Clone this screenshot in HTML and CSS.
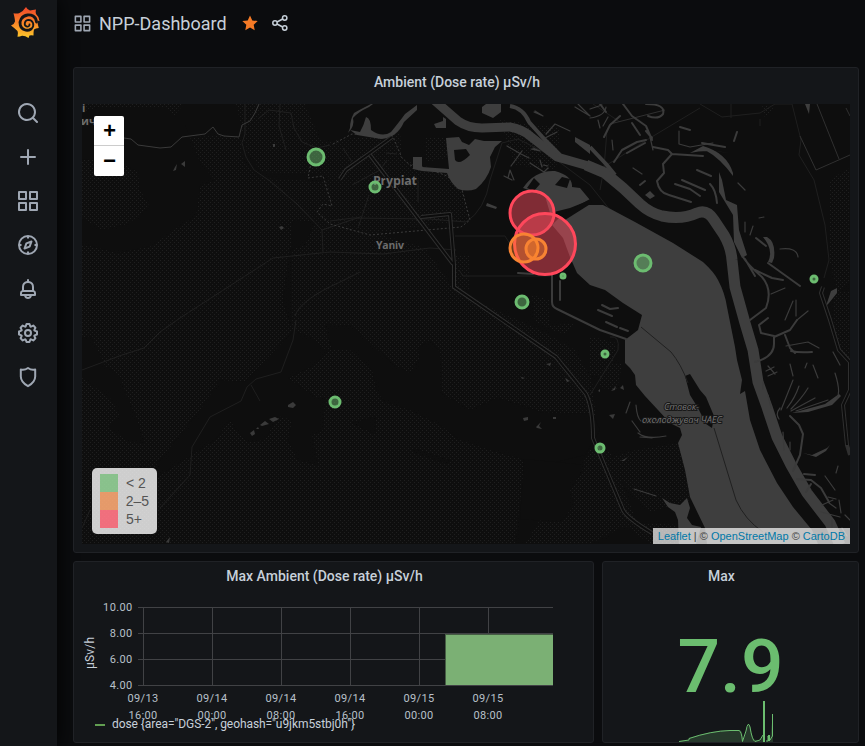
FILE: index.html
```
<!DOCTYPE html>
<html lang="en">
<head>
<meta charset="utf-8">
<title>NPP-Dashboard</title>
<link rel="stylesheet" href="styles.css">
</head>
<body>
<svg class="defs" width="0" height="0" aria-hidden="true">
  <symbol id="apps" viewBox="0 0 24 24"><path d="M10,13H3a1,1,0,0,0-1,1v7a1,1,0,0,0,1,1h7a1,1,0,0,0,1-1V14A1,1,0,0,0,10,13ZM9,20H4V15H9ZM21,2H14a1,1,0,0,0-1,1v7a1,1,0,0,0,1,1h7a1,1,0,0,0,1-1V3A1,1,0,0,0,21,2ZM20,9H15V4h5Zm1,4H14a1,1,0,0,0-1,1v7a1,1,0,0,0,1,1h7a1,1,0,0,0,1-1V14A1,1,0,0,0,21,13Zm-1,7H15V15h5ZM10,2H3A1,1,0,0,0,2,3v7a1,1,0,0,0,1,1h7a1,1,0,0,0,1-1V3A1,1,0,0,0,10,2ZM9,9H4V4H9Z"/></symbol>
</svg>
<div class="app">
  <nav class="sidebar">
    <svg class="logo" viewBox="0 0 29 31">
      <defs><linearGradient id="flame" x1="0" y1="1" x2="0" y2="0"><stop offset="0" stop-color="#fcc92b"/><stop offset=".45" stop-color="#f98a28"/><stop offset="1" stop-color="#f1462a"/></linearGradient></defs>
      <path fill="url(#flame)" d="M15 0Q16.500 3 19 3.500Q21.500 3 25 2.500Q24.300 5 25 7Q28 9.500 28.500 14L26.500 13.500Q26.300 16.500 27.800 21Q24.500 21 23 22.500Q22.500 24 22.500 28.500Q20 28 18.500 28.500L17.500 31Q14 28.500 11 28.700Q9 29.500 6.500 29.800Q7.500 26 6.500 24Q4 21.500 0 18.500Q3.500 17 4 14.500Q4 12 2.500 6.200Q6 7 8.500 6Q12 4.500 15 0Z"/>
      <path fill="none" stroke="#141619" stroke-width="2.800" stroke-linecap="round" d="M25.500 15C25 9 20 7.500 16.500 8C10.500 9 8 14 9.300 18.200C10.500 22.800 16 24.500 19.700 22.200"/>
      <path fill="none" stroke="#141619" stroke-width="1.800" stroke-linecap="round" d="M20.500 22C24 18.500 22 12.800 17.600 12.800C13.500 13 12.500 18 15.500 19.400C17.500 20 18.800 18.700 18.500 17.300"/>
    </svg>
    <div class="menu">
      <svg viewBox="0 0 24 24"><path d="M21.71,20.29,18,16.61A9,9,0,1,0,16.61,18l3.680,3.680a1,1,0,0,0,1.420,0A1,1,0,0,0,21.710,20.290ZM11,18a7,7,0,1,1,7-7A7,7,0,0,1,11,18Z"/></svg>
      <svg viewBox="0 0 24 24"><path d="M19,11H13V5a1,1,0,0,0-2,0v6H5a1,1,0,0,0,0,2h6v6a1,1,0,0,0,2,0V13h6a1,1,0,0,0,0-2Z"/></svg>
      <svg><use href="#apps"/></svg>
      <svg class="line" viewBox="0 0 24 24"><circle cx="12" cy="12" r="9"/><path d="M12 3v2.500M12 18.500V21M3 12h2.500M18.500 12H21M15.500 8.500L13.600 13.600L8.500 15.500L10.400 10.400Z"/></svg>
      <svg viewBox="0 0 24 24"><path d="M18,13.180V10a6,6,0,0,0-5-5.910V3a1,1,0,0,0-2,0V4.090A6,6,0,0,0,6,10v3.180A3,3,0,0,0,4,16v2a1,1,0,0,0,1,1H8.140a4,4,0,0,0,7.720,0H19a1,1,0,0,0,1-1V16A3,3,0,0,0,18,13.180ZM8,10a4,4,0,0,1,8,0v3H8Zm4,10a2,2,0,0,1-1.720-1h3.440A2,2,0,0,1,12,20Zm6-3H6V16a1,1,0,0,1,1-1H17a1,1,0,0,1,1,1Z"/></svg>
      <svg viewBox="0 0 24 24"><path d="M21.32,9.55l-1.89-.63.89-1.78A1,1,0,0,0,20.13,6L18,3.87a1,1,0,0,0-1.15-.19l-1.78.89-.63-1.89A1,1,0,0,0,13.5,2h-3a1,1,0,0,0-.95.68L8.92,4.57,7.14,3.68A1,1,0,0,0,6,3.87L3.87,6a1,1,0,0,0-.19,1.15l.89,1.78-1.89.63A1,1,0,0,0,2,10.5v3a1,1,0,0,0,.68.95l1.89.63-.89,1.78A1,1,0,0,0,3.87,18L6,20.13a1,1,0,0,0,1.15.19l1.78-.89.63,1.89a1,1,0,0,0,.95.68h3a1,1,0,0,0,.95-.68l.63-1.89,1.78.89A1,1,0,0,0,18,20.13L20.13,18a1,1,0,0,0,.19-1.15l-.89-1.78,1.89-.63A1,1,0,0,0,22,13.5v-3A1,1,0,0,0,21.32,9.55ZM20,12.78l-1.2.4A2,2,0,0,0,17.64,16l.57,1.14-1.1,1.1L16,17.64a2,2,0,0,0-2.79,1.16l-.4,1.2H11.22l-.4-1.2A2,2,0,0,0,8,17.64l-1.14.57-1.1-1.1L6.36,16A2,2,0,0,0,5.2,13.18L4,12.78V11.22l1.2-.4A2,2,0,0,0,6.36,8L5.79,6.89l1.1-1.1L8,6.36A2,2,0,0,0,10.82,5.2l.4-1.2h1.56l.4,1.2A2,2,0,0,0,16,6.36l1.14-.57,1.1,1.1L17.64,8a2,2,0,0,0,1.16,2.79l1.2.4ZM12,8a4,4,0,1,0,4,4A4,4,0,0,0,12,8Zm0,6a2,2,0,1,1,2-2A2,2,0,0,1,12,14Z"/></svg>
      <svg class="line" viewBox="0 0 24 24"><path d="M12 3Q8.500 5.400 4.800 4.400V11.500C4.800 16.500 8.500 19.200 12 21.200C15.500 19.200 19.200 16.500 19.200 11.500V4.400Q15.500 5.400 12 3Z"/></svg>
    </div>
  </nav>
  <main class="main">
    <header class="topbar">
      <svg class="t-icon"><use href="#apps"/></svg>
      <h1>NPP-Dashboard</h1>
      <svg class="star" viewBox="0 0 16 16"><path d="M8 0.500L10.300 5.400L15.700 6.100L11.700 9.800L12.700 15.200L8 12.600L3.300 15.200L4.300 9.800L0.300 6.100L5.700 5.400Z"/></svg>
      <svg class="share" viewBox="0 0 16 16"><circle cx="3" cy="8" r="2.200"/><circle cx="12.700" cy="3" r="2.200"/><circle cx="12.700" cy="13" r="2.200"/><path d="M5 7L10.700 4M5 9L10.700 12"/></svg>
    </header>

    <section class="panel map-panel">
      <h2>Ambient (Dose rate) μSv/h</h2>
      <div class="map">
        <svg class="tiles" viewBox="82 104 768 440" width="768" height="440">
          <defs>
            <pattern id="wood" width="4" height="4" patternUnits="userSpaceOnUse"><path d="M0 0h1v1H0zM2 2h1v1H2z" fill="#1f1f1f"/></pattern>
          </defs>
          <g fill="url(#wood)">
            <path d="M82 104H184L172 118L192 137L240 135L243 160L262 178L330 182L322 212L372 232L425 248L456 292L540 330L575 350L592 380L596 420L586 430L530 445L525 462L515 544H82Z"/>
            <path d="M236 104H305L320 140L333 142V175L262 172L246 150L240 120ZM335 140L400 133L403 165L460 176L470 220L435 224L365 235L320 216ZM425 137L448 138L447 158L425 162Z"/>
            <path d="M395 158L446 172L455 215L390 210ZM500 120L560 128L556 170L515 165ZM456 255H470V290H456ZM532 295L550 300V328L535 322ZM548 326L574 323L565 334L552 330ZM589 336L616 343L612 374L590 376Z"/>
            <path d="M600 362L622 364L617 390L600 388ZM636 450L679 443L690 500L650 512L602 460ZM590 450L610 452L636 520L590 544H525L540 520L570 515L550 506L575 478Z"/>
            <path d="M829 180L850 168V280L838 292L829 260ZM833 292H850V365L835 345ZM762 105L774 107L765 118ZM620 522L680 525V544H650Z"/>
          </g>
          <g fill="#0e0e0e">
            <path d="M99 107H165L185 125L200 162L215 180L200 186L196 216L175 229L152 246L118 253L82 244V218L102 230L128 224L150 207L140 190L138 172L112 158L82 160V112Z"/>
            <path d="M82 338L91 336L105 366L118 374L135 415L145 443L128 442L109 427L120 415L110 398L82 378Z"/>
            <path d="M294 220L315 222L305 245L290 250L283 300L292 330V224ZM293 331L313 338L325 350L330 350L313 366L288 378L305 390L316 397H325L323 430L312 435L318 465L298 460L288 440L292 420L278 416L265 440L248 442L236 430L230 420L215 440L140 488L163 456L200 410L220 380L245 382Z"/>
            <path d="M325 324L352 326L378 350L394 365L410 373L420 358L418 348L430 340L440 352L442 378L441 393L470 410L497 398L525 406L540 412L593 414L600 430L585 455L552 463L525 460L490 450L460 440L440 425L410 410L385 402L377 392L372 370L350 350L332 350Z"/>
            <path d="M524 459L586 465L570 490L575 505L560 522L520 519ZM413 448L450 460L447 464L415 453ZM352 423L376 416L375 434Z"/>
          </g>

          <g class="road">
            <path d="M82 370L122 355L144 348L160 332L180 318L273 258L330 252L383 254L430 248L456 250M245 104V134L242 143L246 157L254 170L270 181L297 204L322 230L323 252M322 230L360 217M296 320L293 340L281 372L256 379L247 387L241 401L210 417L192 447L190 475L160 508M251 385L260 401M82 528L90 510M295 316Q300 300 340 282L360 272"/>
            <path d="M258 119L269 110L291 113L294 128L302 142L317 148L330 145M280 104L279 126L286 150M330 221L353 218L430 219L466 222Q485 210 490 180L502 143L518 139L550 155L590 185L610 210M455 236H505L510 244M459 270L463 276H550M343 148L352 162M386 153L397 154M352 185L380 170L387 160M418 180V202M369 195L358 228"/>
            <path d="M600 190L604 168L607 130M602 168L650 138L700 108M700 104L722 117L760 113L775 104H792L801 140L799 155L814 180L825 225L829 260L824 278M731 118V104M760 119V126M590 395L618 350Q620 335 610 337M593 104L620 122"/>
          </g>
          <g class="road-lit">
            <path d="M817 104L839 159M800 136L816 170L850 155M846 108L850 116M610 124L665 110"/>
            <path class="creek" d="M124 138L131 139L138 145L160 148L171 147L182 137L205 134L213 127L218 134L224 136L239 137L242 125L250 121L255 113L259 104"/>
            <path class="dash" d="M333 144L352 134L393 137L402 158L410 165L434 171L447 176L462 190L470 220L461 227L370 235L330 224L317 212L323 204L332 206L323 176L308 178L311 163"/>
          </g>

          <g class="water">
            <path d="M587 205L603 205L635 222L673 243L703 262Q714 272 718 280Q725 293 727 307L730 322L735 347L737 360L742 380L740 394L745 391L750 420L760 450L777 483L793 507L812 530L818 544H707L705 528L690 497L685 470L678 443L682 435L680 428L670 423L658 410L645 396L636 385L635 375L630 368L625 363V340L638 330L642 315L623 303L605 290L590 285L577 273L570 257L563 238L552 225L560 217Z"/>
            <path d="M446 138L459 137L462 142L469 145L475 139L484 141L494 141L502 141L495 147L490 157L491 167Q487 180 476 189Q467 192 458 189Q450 182 447 173L422 171L413 169V157L422 157V167L449 169ZM454 150L455 160Q459 166 470 155L466 149Z" fill-rule="evenodd"/>
            <path d="M348 133Q355 126 353 118Q358 112 369 107L373 104H371Q359 110 354 113Q350 120 350 128ZM350 130L360 132Q364 125 366 117Q371 118 371 130Q382 138 391 132Q400 121 405 114L417 105V110L404 122Q397 138 381 139L357 135Z"/>
            <path d="M482 107L486 104H501L501 112L493 118L482 113ZM434 124L443 121V117L446 119V128L436 128ZM487 203L497 207L496 209L486 206ZM575 137L590 145V154L575 142ZM523 188Q535 170 555 171Q573 176 572 187L580 188L590 200L570 208L550 213L545 196Z"/>
            <path d="M805 104H810L809 114ZM826 306L831 291L837 288V293L829 303ZM645 195L650 191L655 196L650 199ZM662 498L670 503L680 505L687 498L690 508L687 518L692 525L701 527L696 544H679L678 520L675 512L668 507Z"/>
            <path d="M803 453L812 455L827 448L830 445L826 451L816 457ZM792 413L825 404L839 394L841 396L832 405L808 412ZM730 153Q706 149 690 153L703 146Q727 153 733 173L733 176Q720 158 705 150ZM767 237Q776 242 774 258L772 263L768 262Q774 250 763 237ZM719 172L722 180L726 200L737 205L739 230L747 255L742 258L734 242L733 215L719 192Z"/>
          </g>
          <path class="river" d="M434 100L458 121Q468 128 482 128L510 127Q522 129 530 136L557 157L592 167"/>
          <path class="river wide" d="M586 165L605 173L623 188L640 204Q650 213 662 216Q682 220 697 213Q707 209 714 220L724 235Q731 247 732 260L735 287L745 323L753 350L758 382L767 407L777 437L791 465L807 493L830 523L840 545"/>
          <path class="river slim" d="M510 106Q523 108 529 122L545 140L560 155M590 147L606 164L615 175"/>
          <g class="stream">
            <path d="M623 104L632 116L646 126L652 140M632 123L640 135M646 131L652 138M614 162L622 150L637 142L646 140M627 153L636 148L645 143M620 116L610 125L604 137M646 104Q666 104 663 114Q658 120 648 116M680 127L690 130M737 132L734 141M702 143L725 147M653 147L668 150L672 154L663 164L664 173L657 181Q659 193 669 195L691 202M675 184L690 189L700 196M682 180L705 190M697 170L711 176M672 154L703 156M710 184Q716 190 717 203M743 257Q748 265 762 277Q773 290 766 308L750 320M745 259L755 276M755 270L772 278L783 280M768 263L800 286M756 238L766 246M640 185L645 181"/>
            <path class="fine" d="M679 131V144L690 147L713 143M753 226L750 235M771 294L785 288M785 320L793 301M797 320L808 311M796 300V316M745 222V232M759 218L764 217M650 137L653 150M780 249Q797 247 798 257M738 183L745 190M511 166L522 151M508 178L510 170L514 180M507 146L521 154L529 158M533 148L540 151L531 149M504 176L512 180M530 163L544 172L548 168M543 165L548 166M540 160L542 167M535 111L543 116L534 112M546 134L555 124L570 131M545 138L557 132M578 104L590 116L575 107M590 109L602 105M590 118Q605 116 606 107M612 140L613 150M603 126L608 117M598 120L600 128M642 174L633 168"/>
            <path d="M755 362Q774 357 774 344V336L761 333L759 325L768 318M774 337L790 330L797 320M785 335L790 348L795 353M791 351Q799 353 812 352"/>
            <path class="fine" d="M786 346L808 342L819 348M768 366L775 374M766 371L774 367M768 376L777 372M790 364L793 376M807 363L805 368M813 365L818 378M835 373Q841 392 837 398M781 410L793 380M787 408Q795 398 799 386M791 409Q802 398 808 388M791 411L815 398M796 411L828 400M780 408Q775 414 779 419M833 352L840 365M783 432L784 450M768 395L771 408M763 382V389M626 413L630 402M636 405Q637 418 641 421M632 421L640 432M638 433Q647 440 666 436M640 437L652 438M634 489L656 496M790 442V450M838 466L836 473M825 476L835 490M821 512L840 517M822 505L833 500M832 520V530M839 500L841 513M845 515L850 520M829 503L836 508M842 528L847 536M828 497L836 499"/>
            <path d="M790 416L799 425L803 434L800 455L793 471M797 479L811 480L821 488L829 502M804 474L815 475M811 484L806 492M600 104L606 112"/>
            <path d="M552 273V302Q552 307 557 309L600 330L626 339M560 281V300M602 305L610 309L618 308M598 310L612 316M620 328L628 331M606 322L617 327M518 273L533 274"/>
          </g>
          <g class="ponds">
            <path d="M175 269l1-2zM279 227l3-1 2 2-3 2zM273 144h2v3h-2zM173 171l3-1 1-6-2 3zM181 164l4-3v6zM250 433l4-3 1 4-3 2zM256 429l2-2 1 2zM260 425l5-4 4 3-7 2zM269 419l6-2 4 2-6 3zM288 405l5-3 3 3-3 3-5-1zM166 542l4-5-1 6zM611 391l5-5-1 4zM598 391l2-2v3zM609 415l6-1-2 5zM620 388l3-3 1 5zM621 461l7-4-4 4zM523 418l5-1v3l-4 1zM536 427l5-5-2 4 3 3-5-1zM546 364l5-1-1 3zM521 377l4 1-3 1zM565 378l5 3-3 1zM553 417h3v2h-3z"/>
          </g>
          <path class="land" d="M685 376L690 374L700 390L706 397L714 416L712 428L706 424L698 408L690 395Z"/>
          <path class="seam" d="M641 327L671 352Q681 364 688 383M714 428L736 500Q745 520 763 532"/>
          <g class="rails">
            <path class="case" d="M392 137L370 153L346 170L340 179M370 155L453 264M421 217L450 214L454 265V287L556 357L586 394Q593 408 593 438L623 510Q627 518 652 533M823 287L821 293L830 320L839 350L850 362V390L843 405L847 445L850 455"/>
            <path class="core" d="M392 137L370 153L346 170L340 179M370 155L453 264M421 217L450 214L454 265V287L556 357L586 394Q593 408 593 438L623 510Q627 518 652 533M823 287L821 293L830 320L839 350L850 362V390L843 405L847 445"/>
          </g>
          <path class="land" d="M556 218L590 199L592 203L565 220ZM534 178L540 184L534 191L527 188ZM555 185L562 177L570 179L567 188Z"/>

          <g class="places">
            <text x="373" y="185" textLength="44" font-size="12.500">Prypiat</text>
            <text x="376" y="249" textLength="28" font-size="10.500">Yaniv</text>
            <text x="82" y="112" font-size="11">і</text>
            <text x="81" y="125" font-size="11">ич</text>
            <text class="lake" x="664" y="410" textLength="35">Ставок-</text>
            <text class="lake" x="642" y="423" textLength="80">охолоджувач ЧАЕС</text>
          </g>

          <g class="markers">
            <g class="ok"><circle cx="316" cy="157" r="8"/><circle cx="375" cy="187" r="5"/><circle cx="643" cy="263" r="8"/><circle cx="522" cy="302" r="6"/><circle cx="814" cy="279" r="3"/><circle cx="563" cy="276" r="2"/><circle cx="605" cy="354" r="3"/><circle cx="600" cy="448" r="4"/><circle cx="335" cy="402" r="5"/></g>
            <g class="bad"><circle cx="532" cy="213" r="22"/><circle cx="545" cy="244" r="30.500"/></g>
            <g class="warn"><circle cx="524" cy="248" r="14"/><circle cx="536" cy="249" r="10"/></g>
          </g>
        </svg>
        <div class="zoom"><span>+</span><span>−</span></div>
        <div class="legend">
          <div><i class="g"></i>&lt; 2</div>
          <div><i class="o"></i>2–5</div>
          <div><i class="r"></i>5+</div>
        </div>
        <div class="attribution"><a>Leaflet</a> | © <a>OpenStreetMap</a> © <a>CartoDB</a></div>
      </div>
    </section>

    <div class="row">
      <section class="panel chart-panel">
        <h2>Max Ambient (Dose rate) μSv/h</h2>
        <svg class="chart" viewBox="74 591 519 151" width="519" height="151">
          <g class="grid">
            <path d="M138 607.500H553M138 633.500H553M138 659.500H553M138 685.500H553M143.500 607V686M212.500 607V686M281.500 607V686M350.500 607V686M419.500 607V686M488.500 607V686"/>
          </g>
          <path d="M445 634.500H553V685H445.500Z" fill="#7bb074"/>
          <path d="M445.500 634V685M445 634.500H553" stroke="#465d44" fill="none"/>
          <g class="ticks end"><text x="132.500" y="611">10.00</text><text x="132.500" y="637">8.00</text><text x="132.500" y="663">6.00</text><text x="132.500" y="689">4.00</text></g>
          <g class="ticks mid">
            <text x="143" y="702">09/13</text><text x="143" y="719">16:00</text>
            <text x="212" y="702">09/14</text><text x="212" y="719">00:00</text>
            <text x="281" y="702">09/14</text><text x="281" y="719">08:00</text>
            <text x="350" y="702">09/14</text><text x="350" y="719">16:00</text>
            <text x="419" y="702">09/15</text><text x="419" y="719">00:00</text>
            <text x="488" y="702">09/15</text><text x="488" y="719">08:00</text>
          </g>
          <text class="unit" transform="translate(94 669) rotate(-90)" textLength="32">µSv/h</text>
          <path d="M95 725H105" stroke="#629e51" stroke-width="2"/>
          <text class="series" x="112" y="728" textLength="243">dose {area="DGS-2", geohash="u9jkm5stbj0h"}</text>
        </svg>
      </section>
      <section class="panel stat-panel">
        <h2>Max</h2>
        <div class="value">7.9</div>
        <svg class="spark" viewBox="679 699 95 43" width="95" height="43">
          <path fill="#26382b" d="M679 741L689 740V738Q713 730 730 730H740Q743 731 743 741L746 733Q748 723 750 726L753 739L760 741L763 736V742H679ZM766 742L770 739L773 714V742Z"/>
          <path fill="none" stroke="#6bbd6f" d="M679 741.500L689 740V738.500Q711 731 730 730.500H739Q741.500 731 742.500 741.500L746 731Q748 720 750 727Q752 740 755 741.500L760 740L763 735M766 741H768V736L770 740L772.500 736V714"/>
          <path stroke="#6bbd6f" stroke-width="2" d="M764 701V742M769 735V741"/>
        </svg>
      </section>
    </div>
  </main>
</div>
</body>
</html>
```
FILE: styles.css
```
* { box-sizing: border-box; }
body { margin: 0; background: #0b0c0e; color: #c7d0d9; font-family: Roboto, "Liberation Sans", sans-serif; }
.defs { position: absolute; }
.app { display: flex; height: 746px; overflow: hidden; }

.sidebar { flex: none; width: 57px; background: #141619; box-shadow: 0 0 20px #000; display: flex; flex-direction: column; align-items: center; padding-top: 7px; }
.logo { width: 29px; height: 31px; margin-right: 6px; }
.menu { display: flex; flex-direction: column; gap: 20px; margin-top: 63px; margin-right: 1px; }
.menu svg { width: 24px; height: 24px; fill: #9fa7b3; }
.menu svg.line { fill: none; stroke: #9fa7b3; stroke-width: 2; stroke-linejoin: round; }

.main { flex: none; width: 808px; padding: 0 6px 0 16px; }
.topbar { height: 67px; display: flex; align-items: flex-start; padding-top: 12px; }
.t-icon { width: 19px; height: 19px; margin-top: 2px; fill: #9fa7b3; }
.topbar h1 { margin: 0 0 0 7px; width: 143px; font-size: 18px; font-weight: 400; line-height: 24px; }
.star { width: 16px; height: 16px; margin-top: 3px; fill: #f57a26; }
.share { width: 16px; height: 16px; margin: 3px 0 0 14px; fill: none; stroke: #c7d0d9; stroke-width: 1.500; }

.panel { background: #141619; border: 1px solid #202226; border-radius: 3px; }
.panel h2 { margin: 0; height: 29px; padding-right: 18px; line-height: 28px; font-size: 14px; font-weight: 500; text-align: center; }
.map-panel { width: 786px; height: 486px; padding: 0 8px; }
.map { position: relative; height: 440px; margin-top: 7px; background: #0e0e0e; overflow: hidden; }
.tiles { display: block; }

.road path { fill: none; stroke: #1f1f1f; stroke-width: 1; }
.road-lit path { fill: none; stroke: #303030; stroke-width: 1; }
.road-lit .dash { stroke-dasharray: 2 2; stroke: #3a3a3a; }
.road-lit .creek { stroke: #3a3a3a; }
.water { fill: #3e3e3e; }
.river { fill: none; stroke: #3e3e3e; stroke-width: 9; stroke-linejoin: round; }
.river.wide { stroke-width: 11; }
.river.slim { stroke-width: 4; }
.stream path { fill: none; stroke: #3b3b3b; stroke-width: 2; stroke-linejoin: round; stroke-linecap: round; }
.stream .fine { stroke-width: 1.200; }
.ponds { fill: #3a3a3a; }
.land { fill: #0e0e0e; }
.seam { fill: none; stroke: #202020; stroke-width: 1; }
.rails path { fill: none; stroke-linejoin: round; }
.rails .case { stroke: #2f2f2f; stroke-width: 4; }
.rails .core { stroke: #0c0c0c; stroke-width: 2; }

.places text { font-family: "Open Sans", "Noto Sans", sans-serif; font-weight: 700; fill: #6c6c6c; stroke: #111; stroke-width: 2px; paint-order: stroke; }
.places .lake { font-size: 9.500px; font-style: italic; font-weight: 400; fill: #747474; stroke: #181818; }

.markers circle { stroke-width: 3; fill-opacity: .5; }
.ok { stroke: #6cbc70; }
.ok circle { fill: #6cbc70; }
.bad circle { fill: #f2495c; stroke: #ff475b; }
.warn circle { fill: #ff8a2a; fill-opacity: .4; stroke: #f88333; }

.zoom { position: absolute; left: 12px; top: 12px; width: 30px; background: #fff; border-radius: 2px; }
.zoom span { display: block; height: 30px; padding-left: 1px; font: bold 22px/34px "Liberation Mono", monospace; color: #000; text-align: center; }
.zoom span:first-child { border-bottom: 1px solid #ccc; }
.legend { position: absolute; left: 10px; bottom: 10px; width: 65px; height: 66px; padding: 6px 8px; background: rgba(255,255,255,.8); border-radius: 5px; color: #555; font: 14px/18px "Liberation Sans", Arial, sans-serif; white-space: nowrap; }
.legend div { display: flex; gap: 8px; }
.legend i { width: 18px; height: 18px; opacity: .7; }
.legend .g { background: #6cbc70; }
.legend .o { background: #f08540; }
.legend .r { background: #ff475b; }
.attribution { position: absolute; right: 0; bottom: 0; height: 16px; padding: 0 5px; background: rgba(255,255,255,.7); color: #444; font: 11px/16px "Liberation Sans", Arial, sans-serif; white-space: nowrap; }
.attribution a { color: #0078a8; }

.row { display: flex; gap: 8px; margin-top: 8px; }
.chart-panel { width: 521px; height: 182px; }
.chart { display: block; }
.grid path { fill: none; stroke: #414245; }
.ticks { font-size: 11px; fill: #b8c0c9; letter-spacing: .35px; }
.end { text-anchor: end; }
.mid { text-anchor: middle; }
.unit { font-size: 12px; fill: #c7d0d9; }
.series { font-size: 12px; fill: #c7d0d9; }
.stat-panel { width: 257px; height: 182px; display: flex; flex-direction: column; }
.value { height: 108px; line-height: 151px; font-size: 75px; font-weight: 500; color: #6bbd6f; text-align: center; }
.spark { margin-left: 76px; }
```
